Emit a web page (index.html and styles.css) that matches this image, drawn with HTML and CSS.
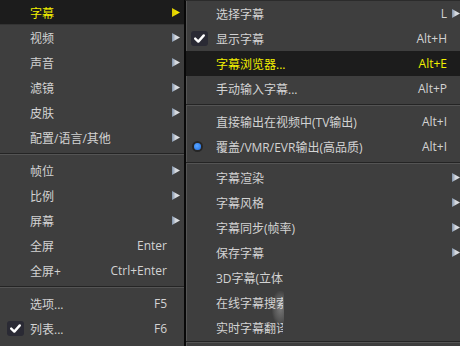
FILE: index.html
```html
<!DOCTYPE html>
<html lang="zh-CN">
<head>
<meta charset="utf-8">
<title>字幕菜单</title>
<link rel="stylesheet" href="styles.css">
</head>
<body>
<svg class="defs" width="0" height="0" aria-hidden="true">
  <defs>
    <linearGradient id="arw" x1="0" y1="0" x2="1" y2="0">
      <stop offset="0" stop-color="#7f93ad"/>
      <stop offset="0.45" stop-color="#d4d8de"/>
      <stop offset="1" stop-color="#e6e6e6"/>
    </linearGradient>
    <linearGradient id="arwy" x1="0" y1="0" x2="1" y2="0">
      <stop offset="0" stop-color="#d8c800"/>
      <stop offset="1" stop-color="#fff200"/>
    </linearGradient>
  </defs>
</svg>
<div class="screen">
  <div class="menu menu-main">
    <div class="item active"><span class="icon"></span><span class="label">字幕</span><span class="key"></span><span class="arrow"><svg width="8" height="9" viewBox="0 0 8 9"><polygon points="0,0 8,4.5 0,9" fill="url(#arwy)"/></svg></span></div>
    <div class="item"><span class="icon"></span><span class="label">视频</span><span class="key"></span><span class="arrow"><svg width="8" height="9" viewBox="0 0 8 9"><polygon points="0,0 8,4.5 0,9" fill="url(#arw)"/></svg></span></div>
    <div class="item"><span class="icon"></span><span class="label">声音</span><span class="key"></span><span class="arrow"><svg width="8" height="9" viewBox="0 0 8 9"><polygon points="0,0 8,4.5 0,9" fill="url(#arw)"/></svg></span></div>
    <div class="item"><span class="icon"></span><span class="label">滤镜</span><span class="key"></span><span class="arrow"><svg width="8" height="9" viewBox="0 0 8 9"><polygon points="0,0 8,4.5 0,9" fill="url(#arw)"/></svg></span></div>
    <div class="item"><span class="icon"></span><span class="label">皮肤</span><span class="key"></span><span class="arrow"><svg width="8" height="9" viewBox="0 0 8 9"><polygon points="0,0 8,4.5 0,9" fill="url(#arw)"/></svg></span></div>
    <div class="item"><span class="icon"></span><span class="label">配置/语言/其他</span><span class="key"></span><span class="arrow"><svg width="8" height="9" viewBox="0 0 8 9"><polygon points="0,0 8,4.5 0,9" fill="url(#arw)"/></svg></span></div>
    <div class="sep"></div>
    <div class="item"><span class="icon"></span><span class="label">帧位</span><span class="key"></span><span class="arrow"><svg width="8" height="9" viewBox="0 0 8 9"><polygon points="0,0 8,4.5 0,9" fill="url(#arw)"/></svg></span></div>
    <div class="item"><span class="icon"></span><span class="label">比例</span><span class="key"></span><span class="arrow"><svg width="8" height="9" viewBox="0 0 8 9"><polygon points="0,0 8,4.5 0,9" fill="url(#arw)"/></svg></span></div>
    <div class="item"><span class="icon"></span><span class="label">屏幕</span><span class="key"></span><span class="arrow"><svg width="8" height="9" viewBox="0 0 8 9"><polygon points="0,0 8,4.5 0,9" fill="url(#arw)"/></svg></span></div>
    <div class="item"><span class="icon"></span><span class="label">全屏</span><span class="key">Enter</span><span class="arrow"></span></div>
    <div class="item"><span class="icon"></span><span class="label">全屏+</span><span class="key">Ctrl+Enter</span><span class="arrow"></span></div>
    <div class="sep"></div>
    <div class="item"><span class="icon"></span><span class="label">选项...</span><span class="key">F5</span><span class="arrow"></span></div>
    <div class="item"><span class="icon"><svg class="check" width="17" height="15" viewBox="0 0 17 15"><rect x="0" y="0" width="17" height="15" rx="3" fill="#2a2a34"/><path d="M4.2 7.6 L7.3 10.6 L12.8 4.4" fill="none" stroke="#ffffff" stroke-width="2.4" stroke-linecap="round" stroke-linejoin="round"/></svg></span><span class="label">列表...</span><span class="key">F6</span><span class="arrow"></span></div>
  </div>
  <div class="menu menu-sub">
    <div class="item"><span class="icon"></span><span class="label">选择字幕</span><span class="key">L</span><span class="arrow"><svg width="8" height="9" viewBox="0 0 8 9"><polygon points="0,0 8,4.5 0,9" fill="url(#arw)"/></svg></span></div>
    <div class="item"><span class="icon"><svg class="check" width="17" height="15" viewBox="0 0 17 15"><rect x="0" y="0" width="17" height="15" rx="3" fill="#2a2a34"/><path d="M4.2 7.6 L7.3 10.6 L12.8 4.4" fill="none" stroke="#ffffff" stroke-width="2.4" stroke-linecap="round" stroke-linejoin="round"/></svg></span><span class="label">显示字幕</span><span class="key">Alt+H</span><span class="arrow"></span></div>
    <div class="item active"><span class="icon"></span><span class="label">字幕浏览器...</span><span class="key">Alt+E</span><span class="arrow"></span></div>
    <div class="item"><span class="icon"></span><span class="label">手动输入字幕...</span><span class="key">Alt+P</span><span class="arrow"></span></div>
    <div class="sep"></div>
    <div class="item"><span class="icon"></span><span class="label">直接输出在视频中(TV输出)</span><span class="key">Alt+I</span><span class="arrow"></span></div>
    <div class="item"><span class="icon"><span class="radio"></span></span><span class="label">覆盖/VMR/EVR输出(高品质)</span><span class="key">Alt+I</span><span class="arrow"></span></div>
    <div class="sep sep-sm"></div>
    <div class="item"><span class="icon"></span><span class="label">字幕渲染</span><span class="key"></span><span class="arrow"><svg width="8" height="9" viewBox="0 0 8 9"><polygon points="0,0 8,4.5 0,9" fill="url(#arw)"/></svg></span></div>
    <div class="item"><span class="icon"></span><span class="label">字幕风格</span><span class="key"></span><span class="arrow"><svg width="8" height="9" viewBox="0 0 8 9"><polygon points="0,0 8,4.5 0,9" fill="url(#arw)"/></svg></span></div>
    <div class="item"><span class="icon"></span><span class="label">字幕同步(帧率)</span><span class="key"></span><span class="arrow"><svg width="8" height="9" viewBox="0 0 8 9"><polygon points="0,0 8,4.5 0,9" fill="url(#arw)"/></svg></span></div>
    <div class="item"><span class="icon"></span><span class="label">保存字幕</span><span class="key"></span><span class="arrow"><svg width="8" height="9" viewBox="0 0 8 9"><polygon points="0,0 8,4.5 0,9" fill="url(#arw)"/></svg></span></div>
    <div class="item"><span class="icon"></span><span class="label clip">3D字幕(立体)</span></div>
    <div class="item"><span class="icon"></span><span class="label clip">在线字幕搜索</span></div>
    <div class="item"><span class="icon"></span><span class="label clip">实时字幕翻译</span></div>
    <div class="sep sep-end"></div>
    <div class="ghost"></div>
  </div>
</div>
</body>
</html>
```

FILE: styles.css
```css
html, body {
  margin: 0;
  padding: 0;
  background: #3e3e3e;
  overflow: hidden;
}

body {
  font-family: "Open Sans", "Noto Sans CJK SC", sans-serif;
  font-size: 12px;
  color: #d3d3d3;
}

.defs {
  position: absolute;
  width: 0;
  height: 0;
}

.screen {
  display: flex;
  width: 460px;
  height: 346px;
  overflow: hidden;
}

.menu {
  flex: none;
  display: flex;
  flex-direction: column;
  background: #3e3e3e;
}

.menu-main {
  width: 184px;
  border-right: 1px solid #080808;
}

.menu-sub {
  position: relative;
  width: 278px;
  border-left: 1px solid #080808;
  border-top: 1px solid #2b2b2b;
  box-shadow: inset 1px 0 0 #565656;
}

.item {
  flex: none;
  display: flex;
  align-items: center;
  height: 25px;
  white-space: nowrap;
}

.item.active {
  background: #1c1c1c;
  color: #f2f000;
}

.menu-main .item.active {
  box-shadow: inset 0 -1px 0 #333;
}

.icon {
  flex: none;
  width: 30px;
  height: 25px;
  display: flex;
  align-items: center;
  justify-content: center;
}

.menu-sub .icon {
  justify-content: flex-start;
  padding-left: 5px;
  box-sizing: border-box;
}

.label {
  flex: 1;
  min-width: 0;
}

.label.clip {
  flex: none;
  width: 67px;
  overflow: hidden;
}

.key {
  flex: none;
}

.arrow {
  flex: none;
  width: 17px;
  height: 25px;
  box-sizing: border-box;
  padding-right: 4px;
  display: flex;
  align-items: center;
  justify-content: flex-end;
}

.arrow svg {
  display: block;
}

.check {
  display: block;
}

.radio {
  display: block;
  width: 7px;
  height: 7px;
  margin-left: 3px;
  border-radius: 50%;
  background: radial-gradient(circle at 40% 40%, #5aa6ff 0%, #2f7ff0 70%);
  box-shadow: 0 0 0 2px #262626;
}

.sep {
  flex: none;
  height: 8px;
  box-sizing: border-box;
  padding-top: 3px;
}

.sep::before {
  content: "";
  display: block;
  border-top: 1px solid #242424;
  border-bottom: 1px solid #545454;
}

.sep-sm {
  height: 6px;
}

.sep-end {
  height: 6px;
  padding-top: 1px;
}

.ghost {
  position: absolute;
  left: 86px;
  top: 290px;
  width: 12px;
  height: 34px;
  background: radial-gradient(ellipse at 70% 50%, rgba(230, 230, 230, 0.35) 0%, rgba(230, 230, 230, 0.12) 55%, rgba(230, 230, 230, 0) 75%);
  pointer-events: none;
}
```
